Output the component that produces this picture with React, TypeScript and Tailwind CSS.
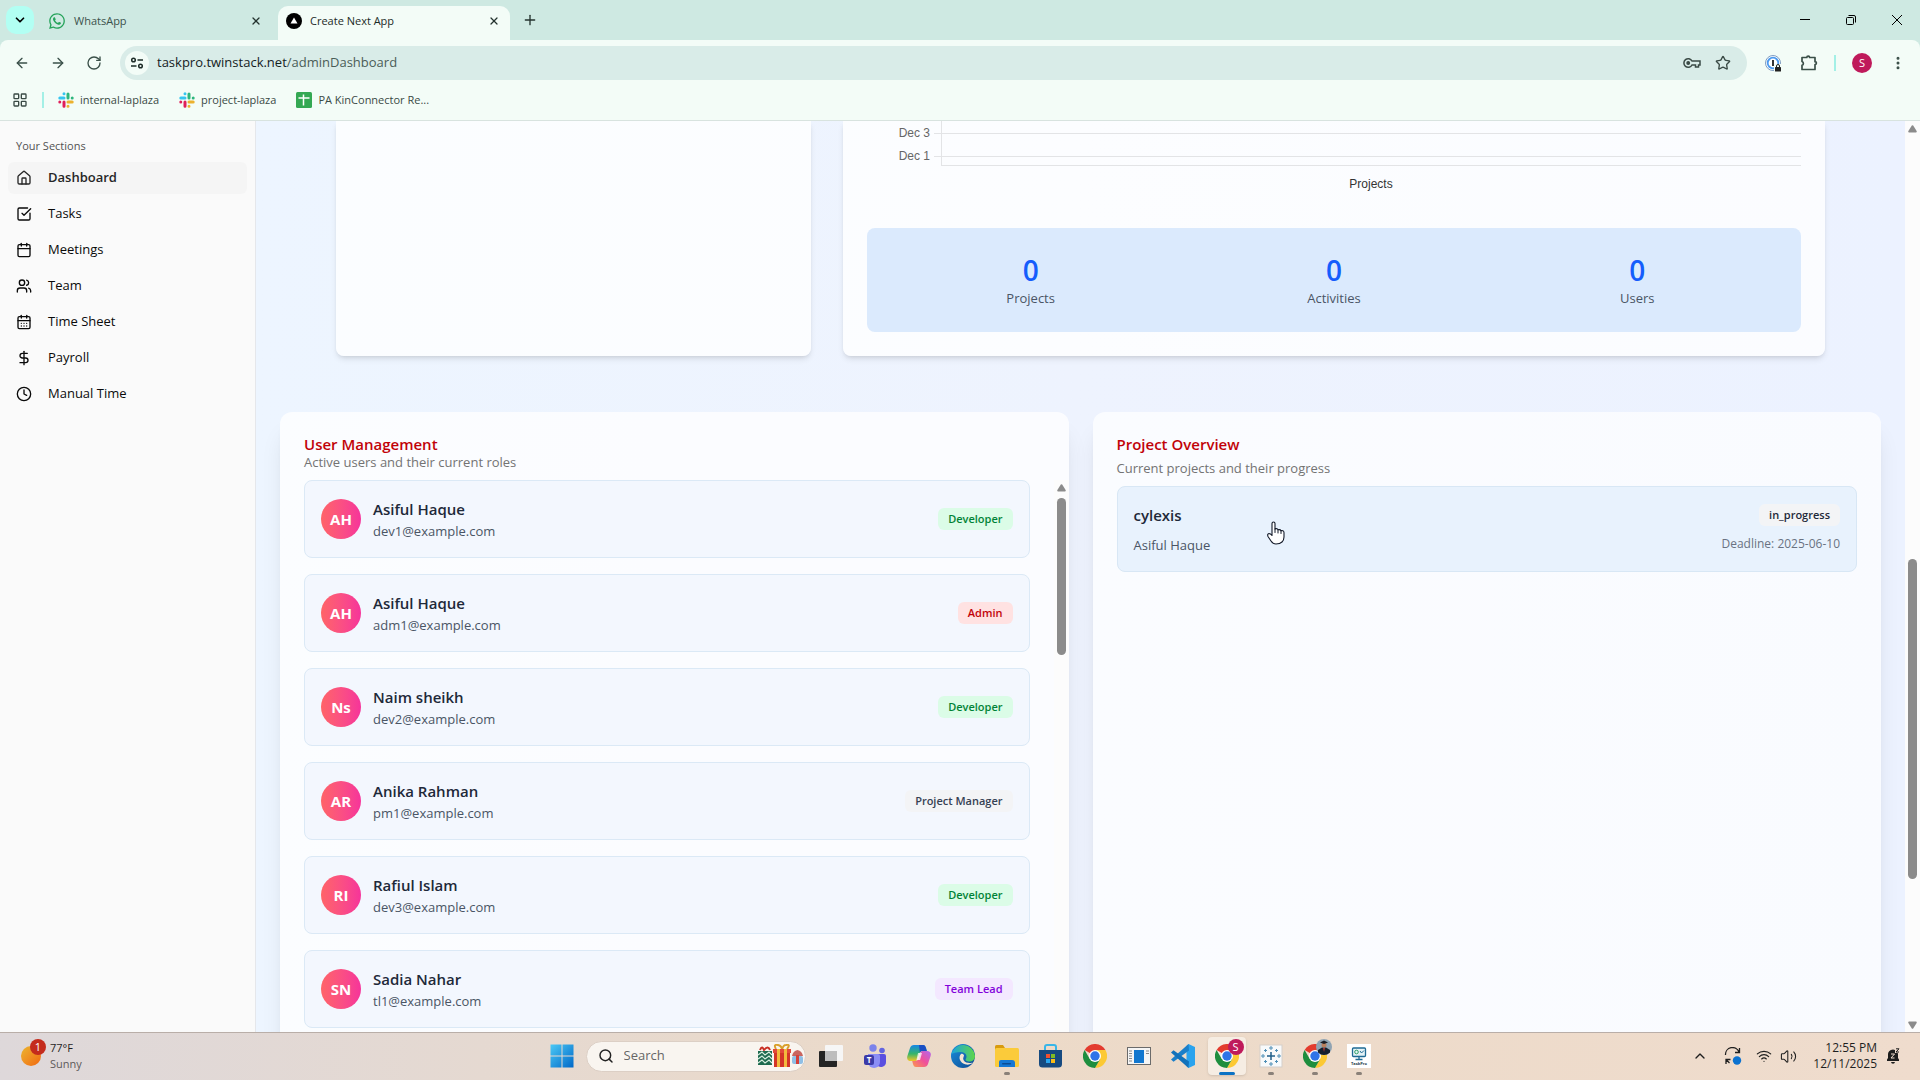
import type { ReactNode } from 'react';
import {
  ArrowLeft,
  ArrowRight,
  Calendar,
  CalendarDays,
  ChevronDown,
  ChevronUp,
  Clock,
  DollarSign,
  EllipsisVertical,
  House,
  LayoutGrid,
  Plus,
  RotateCw,
  Search,
  SquareCheckBig,
  Star,
  Users,
  Volume2,
  Wifi,
  X,
} from 'lucide-react';
import { FaWhatsapp } from 'react-icons/fa';

const navItems = [
  { label: 'Dashboard', icon: House, active: true },
  { label: 'Tasks', icon: SquareCheckBig },
  { label: 'Meetings', icon: Calendar },
  { label: 'Team', icon: Users },
  { label: 'Time Sheet', icon: CalendarDays },
  { label: 'Payroll', icon: DollarSign },
  { label: 'Manual Time', icon: Clock },
];

const users = [
  { initials: 'AH', name: 'Asiful Haque', email: 'dev1@example.com', role: 'Developer' },
  { initials: 'AH', name: 'Asiful Haque', email: 'adm1@example.com', role: 'Admin' },
  { initials: 'Ns', name: 'Naim sheikh', email: 'dev2@example.com', role: 'Developer' },
  { initials: 'AR', name: 'Anika Rahman', email: 'pm1@example.com', role: 'Project Manager' },
  { initials: 'RI', name: 'Rafiul Islam', email: 'dev3@example.com', role: 'Developer' },
  { initials: 'SN', name: 'Sadia Nahar', email: 'tl1@example.com', role: 'Team Lead' },
];

const roleColors: Record<string, string> = {
  Developer: 'bg-green-100 text-green-700',
  Admin: 'bg-red-100 text-red-700',
  'Project Manager': 'bg-gray-100 text-gray-700',
  'Team Lead': 'bg-purple-100 text-purple-700',
};

const stats = [
  { label: 'Projects', value: 0 },
  { label: 'Activities', value: 0 },
  { label: 'Users', value: 0 },
];

function SlackLogo() {
  return (
    <svg viewBox="0 0 16 16" className="size-4">
      <g strokeWidth="3" strokeLinecap="round">
        <path d="M6 1.8v0M1.8 6h4.2" stroke="#36c5f0" />
        <path d="M10 2v4M14.2 6v0" stroke="#2eb67d" />
        <path d="M10 10h4.2M10 14.2v0" stroke="#ecb22e" />
        <path d="M6 10v4.2M1.8 10v0" stroke="#e01e5a" />
      </g>
    </svg>
  );
}

function ChromeLogo() {
  return (
    <svg viewBox="0 0 24 24" className="size-6">
      <path d="M12 12L1.6 6A12 12 0 0 1 22.4 6Z" fill="#e33b2e" />
      <path d="M12 6h10.4a12 12 0 0 1-10.4 18l5.2-9Z" fill="#fcc934" />
      <path d="M6.8 15L1.6 6A12 12 0 0 0 12 24l5.2-9Z" fill="#1e8e3e" />
      <circle cx="12" cy="12" r="6" fill="#fff" />
      <circle cx="12" cy="12" r="4.7" fill="#2f74e8" />
    </svg>
  );
}

function TaskViewIcon() {
  return (
    <svg viewBox="0 0 24 24" className="size-6">
      <rect x="6" y="1" width="18" height="16" rx="1" fill="#f6f6f6" />
      <rect x="0" y="7" width="18" height="16" rx="1" fill="#242424" />
      <rect x="6" y="7" width="12" height="10" fill="#bdbdbd" />
    </svg>
  );
}

function TeamsLogo() {
  return (
    <svg viewBox="0 0 24 24" className="size-6">
      <circle cx="10" cy="4" r="3.7" fill="#7b83eb" />
      <circle cx="19" cy="6.5" r="2.8" fill="#6264e0" />
      <path d="M14 10h7a2 2 0 0 1 2 2v6a5 5 0 0 1-9 3Z" fill="#5b4fe0" />
      <path d="M5 10h10a2 2 0 0 1 2 2v6a6 6 0 0 1-12 0Z" fill="#8b8df5" />
      <rect x="1" y="11" width="10" height="10" rx="2" fill="#3b3aa8" />
      <text x="6" y="19" textAnchor="middle" fontSize="8" fontWeight="700" fill="#fff" fontFamily="Open Sans, sans-serif">T</text>
    </svg>
  );
}

function CopilotLogo() {
  return (
    <svg viewBox="0 0 24 24" className="size-6">
      <defs>
        <linearGradient id="cpA" x1="0" y1="0" x2="0" y2="1">
          <stop offset="0" stopColor="#1687e8" />
          <stop offset=".55" stopColor="#35b56a" />
          <stop offset="1" stopColor="#f3c627" />
        </linearGradient>
        <linearGradient id="cpB" x1="1" y1="0" x2="0" y2="1">
          <stop offset="0" stopColor="#b267ef" />
          <stop offset=".5" stopColor="#f0509a" />
          <stop offset="1" stopColor="#fb9a4b" />
        </linearGradient>
      </defs>
      <path d="M7 1h9c2 0 2.500 1.500 3 3l.8 3h-4c-2 0-3 1-3.500 3l-1.600 5c-.5 1.600-1.500 2-3 2H4c-3 0-4.500-2-3.600-5L3 4c.7-2 2-3 4-3Z" fill="url(#cpA)" />
      <path d="M12 1h4c2 0 2.500 1.500 3 3l.8 3h-4c-1.500 0-2.300.500-3 1.500Z" fill="#1a4fc4" />
      <path d="M17 23H9c-2 0-2.600-1.500-3-3l-.8-3h3c2 0 3-1 3.500-3l1.600-5c.5-1.600 1.500-2 3-2H20c3 0 4.500 2 3.600 5L21 20c-.7 2-2 3-4 3Z" fill="url(#cpB)" />
      <path d="M11 9h4l-2 7H9.500Z" fill="#fff" opacity=".75" />
    </svg>
  );
}

function EdgeLogo() {
  return (
    <svg viewBox="0 0 24 24" className="size-6">
      <defs>
        <linearGradient id="edgeTop" x1="0" y1="0" x2="1" y2="0">
          <stop offset="0" stopColor="#1ba4de" />
          <stop offset="1" stopColor="#5ed648" />
        </linearGradient>
        <linearGradient id="edgeLow" x1="0" y1="0" x2="1" y2="1">
          <stop offset="0" stopColor="#1c8fdd" />
          <stop offset="1" stopColor="#0c4a92" />
        </linearGradient>
      </defs>
      <circle cx="12" cy="12" r="12" fill="url(#edgeLow)" />
      <path d="M.3 10.500A12 12 0 0 1 24 12c0 3.500-2.500 5.500-5.500 5.500-3 0-4.500-1.500-3.700-2.600 2-3-.3-6.900-4.800-6.900C5 8 1.500 9.300.3 10.500Z" fill="url(#edgeTop)" />
      <path d="M10 10c-3 3-1.500 9 5 10.500 2.500.5 5-.3 7-2-1 .500-7.500 1.500-9.500-2.500-1-2 .500-3.500.500-4.500S11.500 9 10 10Z" fill="#f2e3d4" />
    </svg>
  );
}

function ExplorerLogo() {
  return (
    <svg viewBox="0 0 24 24" className="size-6">
      <path d="M0 2.500Q0 1 1.500 1H8l2 3v4H0Z" fill="#d89b10" />
      <rect x="0" y="4" width="24" height="19" rx="1.500" fill="#fbcb3a" />
      <path d="M4 23v-5q0-2 2-2h11q3 0 3 3v4Z" fill="#1578d4" />
      <rect x="7" y="19" width="9" height="1.500" rx=".7" fill="#0b4c94" />
    </svg>
  );
}

function StoreLogo() {
  return (
    <svg viewBox="0 0 24 24" className="size-6">
      <path d="M6 6V3q0-2 2-2h7q2 0 2 2v3" fill="none" stroke="#38b6e8" strokeWidth="2" />
      <path d="M0 6h23v14q0 3.500-3.500 3.500h-16Q0 23.500 0 20Z" fill="#164a80" />
      <path d="M7 10h4v4H7Z" fill="#f05030" />
      <path d="M12 10h4v4h-4Z" fill="#7fbb25" />
      <path d="M7 15h4v4H7Z" fill="#2aa5ee" />
      <path d="M12 15h4v4h-4Z" fill="#fbbc16" />
    </svg>
  );
}

function WindowAppIcon() {
  return (
    <svg viewBox="0 0 24 24" className="size-6">
      <rect x=".5" y="3.500" width="23" height="17" fill="#f5f5f5" stroke="#6b6b6b" />
      <rect x="7" y="6" width="10" height="13" fill="#1277cf" />
      <path d="M2 7h3M2 9.500h3M2 12h3M2 14.500h3M2 17h3M19 7h3M19 9.500h3" stroke="#888" />
    </svg>
  );
}

function VsCodeLogo() {
  return (
    <svg viewBox="0 0 24 24" className="size-6">
      <path d="M17.500 0L24 3v18l-6.500 3-2-2V2Z" fill="#2aa3ee" />
      <path d="M17.500 0L0 15.500l2.500 2.300L18 6.500Z" fill="#1b7fc9" />
      <path d="M17.500 24L0 8.500l2.500-2.300L18 17.500Z" fill="#1272bb" />
    </svg>
  );
}

function BurstAppIcon() {
  return (
    <svg viewBox="0 0 24 24" className="size-6">
      <rect x="1" y="1" width="22" height="22" fill="#f8fafb" stroke="#d5cfca" />
      <path d="M12 8v8M8 12h8" stroke="#1f5f8a" strokeWidth="1.500" />
      <path d="M12 2v4M10 4h4M12 18v4M10 20h4M4 10v4M2 12h4M20 10v4M18 12h4M6.500 5v3M5 6.500h3M17.500 5v3M16 6.500h3M6.500 16v3M5 17.500h3M17.500 16v3M16 17.500h3" stroke="#4f8fb6" strokeWidth="1" />
    </svg>
  );
}

function TaskProIcon() {
  return (
    <svg viewBox="0 0 24 24" className="size-6">
      <rect width="24" height="24" fill="#fff" />
      <rect x="5.500" y="4" width="13" height="8.500" rx="1" fill="#e4f2f6" stroke="#1f6b94" strokeWidth="1.300" />
      <circle cx="9.500" cy="8" r="1.800" fill="none" stroke="#2da065" />
      <path d="M13 7l1.500 2L17 6.500" stroke="#1f6b94" fill="none" />
      <path d="M12 13v2M8.500 15.500h7" stroke="#1f6b94" strokeWidth="1.300" />
      <text x="12" y="20.500" textAnchor="middle" fontSize="4" fontWeight="700" fill="#243746" fontFamily="Open Sans, sans-serif">TaskPro</text>
    </svg>
  );
}

function GiftsIcon() {
  return (
    <svg viewBox="0 0 46 24" className="h-6 w-[46px]">
      <path d="M3 6q2-5 4 0q4-5 6 0" fill="none" stroke="#c92f24" strokeWidth="2" />
      <rect x="1" y="7" width="14" height="14" fill="#1e6a4f" />
      <path d="M1 11l4-3 3 3 4-3 3 3M1 15l4-3 3 3 4-3 3 3M1 19l4-3 3 3 4-3 3 3" fill="none" stroke="#d9efe0" strokeWidth="1.200" />
      <path d="M19 5q-3-5 2-4 4 1 4 5 1-5 4-5 5-1 1 4" fill="none" stroke="#d9a02c" strokeWidth="2" />
      <rect x="16" y="5" width="18" height="4" fill="#e2493a" />
      <rect x="17" y="9" width="16" height="14" fill="#d33428" />
      <rect x="20" y="5" width="3" height="18" fill="#f2b93c" />
      <rect x="27" y="5" width="3" height="18" fill="#f2b93c" />
      <rect x="35" y="12" width="11" height="8" rx="2" fill="#8fbfe6" />
      <path d="M35 12q1-5 5.500-6 4.500 1 5.500 6Z" fill="#c9655f" />
      <rect x="39" y="11" width="3" height="9" fill="#d5403a" />
    </svg>
  );
}

function TabItem({ icon, title, active }: { icon: ReactNode; title: string; active?: boolean }) {
  return (
    <div
      className={
        active
          ? 'flex h-[34px] w-[232px] items-center gap-2 rounded-t-[10px] bg-[#f3fcf7] pr-2 pb-1 pl-2'
          : 'flex h-[34px] w-[228px] items-center gap-2 pr-3 pb-1'
      }
    >
      {icon}
      <button className={active ? 'flex-1 text-left text-[#1c2b27]' : 'flex-1 text-left text-[#3c524c]'}>{title}</button>
      <button aria-label={`Close ${title}`} className="p-0.5">
        <X className="size-3" strokeWidth={2.5} />
      </button>
    </div>
  );
}

function BrowserChrome() {
  return (
    <header className="bg-[#cee9e2] text-[11px] text-[#24332f]">
      <div className="flex h-10 items-end pl-1.5">
        <button aria-label="Search tabs" className="mb-1.5 flex h-7 w-7 items-center justify-center rounded-[10px] bg-[#b2fff3] text-black">
          <ChevronDown className="size-3.5" strokeWidth={3} />
        </button>
        <div className="ml-3.5 flex">
          <TabItem icon={<FaWhatsapp className="size-[18px] text-[#25a35a]" />} title="WhatsApp" />
          <div className="w-0.5" />
          <TabItem
            active
            title="Create Next App"
            icon={
              <svg viewBox="0 0 16 16" className="size-4">
                <circle cx="8" cy="8" r="8" />
                <path d="M8 4.500l3.500 6h-7Z" fill="#fff" />
              </svg>
            }
          />
        </div>
        <button aria-label="New tab" className="mb-3 ml-3">
          <Plus className="size-4" />
        </button>
        <div className="ml-auto flex h-10 items-center text-black">
          <button aria-label="Minimize" className="flex w-[46px] justify-center">
            <svg viewBox="0 0 10 10" className="size-2.5" stroke="currentColor"><path d="M0 4.500h10" /></svg>
          </button>
          <button aria-label="Restore" className="flex w-[46px] justify-center">
            <svg viewBox="0 0 10 10" className="size-2.5" fill="none" stroke="currentColor">
              <rect x=".5" y="2.500" width="7" height="7" rx="1" />
              <path d="M2.500.5H8q1.500 0 1.500 1.500v5.500" />
            </svg>
          </button>
          <button aria-label="Close" className="flex w-[46px] justify-center">
            <svg viewBox="0 0 10 10" className="size-2.5" stroke="currentColor"><path d="M0 0l10 10M10 0L0 10" /></svg>
          </button>
        </div>
      </div>

      <div className="rounded-t-lg border-b border-[#d8e3df] bg-[#f3fcf7]">
        <div className="flex h-[46px] items-center pl-3.5">
          <div className="flex w-[106px] items-center gap-5 text-[#3a5049]">
            <button aria-label="Back"><ArrowLeft className="size-4" /></button>
            <button aria-label="Forward"><ArrowRight className="size-4" /></button>
            <button aria-label="Reload"><RotateCw className="size-4" /></button>
          </div>
          <div className="flex h-[34px] flex-1 items-center rounded-full bg-[#d9ece8] pr-4 pl-[5px]">
            <button aria-label="Site information" className="flex size-6 items-center justify-center rounded-full bg-[#f3fcf7]">
              <svg viewBox="0 0 14 14" className="size-3.5" fill="none" stroke="#1c2b27" strokeWidth="1.500">
                <circle cx="3.500" cy="4" r="1.800" />
                <circle cx="10.500" cy="10" r="1.800" />
                <path d="M7.500 4H13M1 10h5.500" />
              </svg>
            </button>
            <label className="ml-2 flex flex-1 text-[13px]">
              <span className="text-[#14211d]">taskpro.twinstack.net</span>
              <input aria-label="Address" defaultValue="/adminDashboard" className="flex-1 bg-transparent text-[#4a5d57] outline-none" />
            </label>
            <div className="flex items-center gap-3.5 text-[#3a4a45]">
              <button aria-label="Passwords">
                <svg viewBox="0 0 18 12" className="h-3 w-[18px]" fill="none" stroke="currentColor" strokeWidth="1.500">
                  <path d="M9 4A4.300 4.300 0 1 0 9 8h3.500v2h3V8H17V4Z" />
                  <circle cx="5.200" cy="6" r="1.200" fill="currentColor" />
                </svg>
              </button>
              <button aria-label="Bookmark this page"><Star className="size-4" /></button>
            </div>
          </div>
          <div className="flex items-center pr-3.5 pl-[18px] text-[#3a4f48]">
            <button aria-label="1Password">
              <svg viewBox="0 0 17 17" className="size-[17px]">
                <circle cx="8" cy="8" r="7.500" fill="#fff" stroke="#7f9cc0" />
                <circle cx="8" cy="8" r="5.300" fill="none" stroke="#4c9af0" strokeWidth="1.800" />
                <path d="M8 5v6" stroke="#333" strokeWidth="2" />
                <rect x="9" y="9" width="8" height="8" fill="#f3fcf7" />
                <rect x="10" y="12" width="6" height="4.500" rx=".6" fill="#222" />
                <path d="M11.500 12v-1a1.500 1.500 0 0 1 3 0v1" fill="none" stroke="#222" />
              </svg>
            </button>
            <button aria-label="Extensions" className="ml-[18px]">
              <svg viewBox="0 0 18 18" className="size-[18px]" fill="none" stroke="currentColor" strokeWidth="1.700">
                <path d="M2 3.500h4.800a1.400 1.400 0 0 1 2.800 0H15v4.200a1.400 1.400 0 0 1 0 2.800v5H2v-4.200a2 2 0 0 0 0-3.800Z" strokeLinejoin="round" />
              </svg>
            </button>
            <span className="ml-4 h-4 w-0.5 bg-[#a3f0e6]" />
            <button aria-label="Profile" className="ml-4 flex size-5 items-center justify-center rounded-full bg-[#bf1a5b] text-[11px] text-white">S</button>
            <button aria-label="Menu" className="ml-[18px]"><EllipsisVertical className="size-4" strokeWidth={2.5} /></button>
          </div>
        </div>
        <nav className="flex h-[34px] items-center pb-1.5 pl-3 text-[#3a4a45]">
          <button aria-label="Apps"><LayoutGrid className="size-4" /></button>
          <span className="mx-3.5 h-4 w-0.5 bg-[#a3f0e6]" />
          <a href="#internal" className="flex items-center gap-1.5"><SlackLogo />internal-laplaza</a>
          <a href="#project" className="ml-5 flex items-center gap-1.5"><SlackLogo />project-laplaza</a>
          <a href="#sheet" className="ml-5 flex items-center gap-1.5">
            <svg viewBox="0 0 16 16" className="size-4">
              <rect width="16" height="16" rx="1.500" fill="#34a853" />
              <path d="M7.500 2.500v11M2.500 6h11" stroke="#fff" strokeWidth="1.500" />
            </svg>
            PA KinConnector Re...
          </a>
        </nav>
      </div>
    </header>
  );
}

function Sidebar() {
  return (
    <aside className="w-64 shrink-0 border-r border-gray-200 bg-[#fafafa] px-2 pt-[9px]">
      <h2 className="flex h-8 items-center px-2 text-[11px] font-medium text-neutral-600">Your Sections</h2>
      <nav className="flex flex-col gap-1">
        {navItems.map(({ label, icon: Icon, active }) => (
          <a
            key={label}
            href={`#${label}`}
            className={
              active
                ? 'flex h-8 items-center gap-4 rounded-md bg-neutral-100 px-2 text-[13px] font-semibold text-neutral-800'
                : 'flex h-8 items-center gap-4 rounded-md px-2 text-[13px] text-neutral-950'
            }
          >
            <Icon className="size-4" />
            {label}
          </a>
        ))}
      </nav>
    </aside>
  );
}

function ActivityChart() {
  return (
    <figure>
      <svg className="h-[47px] w-full" fontSize="12" fontFamily="Liberation Sans, Arial, sans-serif">
        <g stroke="#e3e4e6" shapeRendering="crispEdges">
          <line x1="67" x2="100%" y1="12" y2="12" />
          <line x1="67" x2="100%" y1="35" y2="35" />
          <line x1="74" x2="100%" y1="44" y2="44" />
          <line x1="74" x2="74" y1="0" y2="45" />
        </g>
        <g fill="#666" textAnchor="end">
          <text x="63" y="16">Dec 3</text>
          <text x="63" y="39">Dec 1</text>
        </g>
      </svg>
      <figcaption className="mt-1.5 pl-[74px] text-center font-[Liberation_Sans,Arial,sans-serif] text-xs leading-5 text-[#333]">
        Projects
      </figcaption>
    </figure>
  );
}

// Arrow glyph shared by both scrollbars
function ScrollArrow({ down }: { down?: boolean }) {
  return (
    <svg viewBox="0 0 9 8" className={down ? 'h-2 w-[9px] rotate-180' : 'h-2 w-[9px]'} fill="#8b8b8b">
      <path d="M3.800.6q.7-.9 1.400 0L8.600 6q.6 1.500-.8 1.500H1.200Q-.2 7.500.4 6Z" />
    </svg>
  );
}

function UserManagement() {
  return (
    <section className="flex h-[760px] flex-col rounded-xl bg-white/75 pt-6 pl-6 shadow-xl">
      <h2 className="text-[15px] leading-4 font-semibold text-red-700">User Management</h2>
      <p className="text-[13px] leading-5 text-neutral-500">Active users and their current roles</p>
      <div className="mt-2 flex min-h-0 flex-1">
        <ul className="flex flex-1 flex-col gap-4 pr-6">
          {users.map((user) => (
            <li key={user.email} className="flex h-[78px] shrink-0 items-center gap-3 rounded-lg border border-[#dbe9f6] bg-[#f3f7fe] px-4">
              <span className="flex size-10 items-center justify-center rounded-full bg-linear-to-r from-[#ff6467] to-[#f6339a] text-[15px] font-bold text-white">
                {user.initials}
              </span>
              <div className="flex-1">
                <p className="text-[15px] leading-6 font-semibold text-gray-800">{user.name}</p>
                <p className="text-[13px] leading-5 text-gray-600">{user.email}</p>
              </div>
              <span className={`rounded-md px-2.5 text-[11px] leading-[22px] font-semibold ${roleColors[user.role]}`}>{user.role}</span>
            </li>
          ))}
        </ul>
        <div className="flex w-[15px] shrink-0 flex-col items-center gap-1.5 bg-[#fcfcfc] pt-1">
          <ScrollArrow />
          <div className="h-[157px] w-[9px] rounded-full bg-[#8b8b8b]" />
        </div>
      </div>
    </section>
  );
}

function ProjectOverview() {
  return (
    <section className="h-[760px] rounded-xl bg-white/70 p-6 shadow-xl">
      <h2 className="text-[15px] leading-4 font-semibold text-red-700">Project Overview</h2>
      <p className="mt-1.5 text-[13px] leading-5 text-neutral-500">Current projects and their progress</p>
      <article className="mt-2 flex h-[86px] justify-between rounded-lg border border-[#d8e7f5] bg-[#e8f2fd] p-4">
        <div>
          <h3 className="text-[15px] leading-6 font-semibold text-gray-800">cylexis</h3>
          <p className="mt-2 text-[13px] leading-5 text-gray-600">Asiful Haque</p>
        </div>
        <div className="flex flex-col items-end pt-px">
          <span className="rounded-md bg-gray-100 px-2.5 text-[11px] leading-[22px] font-semibold text-gray-800">in_progress</span>
          <p className="mt-2 text-xs leading-5 text-gray-500">Deadline: 2025-06-10</p>
        </div>
      </article>
    </section>
  );
}

function Dashboard() {
  return (
    <main className="min-w-0 flex-1 overflow-hidden bg-linear-to-r from-[#edf5ff] via-[#eef3fe] to-[#ecf2ff] px-6">
      <div className="grid grid-cols-3 gap-8 px-14">
        <section className="rounded-b-lg bg-white/80 shadow-md" />
        <section className="col-span-2 rounded-b-lg bg-white/80 px-6 pb-6 shadow-md">
          <ActivityChart />
          <dl className="mt-[34px] grid grid-cols-3 gap-6 rounded-lg bg-[#dbeafd] p-6 text-center">
            {stats.map((stat) => (
              <div key={stat.label} className="flex flex-col-reverse">
                <dt className="text-[13px] leading-5 text-gray-600">{stat.label}</dt>
                <dd className="text-[28px] leading-9 font-semibold text-[#155dfc]">{stat.value}</dd>
              </div>
            ))}
          </dl>
        </section>
      </div>
      <div className="mt-14 grid grid-cols-2 gap-6">
        <UserManagement />
        <ProjectOverview />
      </div>
    </main>
  );
}

function PageScrollbar() {
  return (
    <div className="flex w-[15px] shrink-0 flex-col items-center bg-[#fcfcfc] pt-1 pb-[3px]">
      <ScrollArrow />
      <div className="flex-[426]" />
      <div className="w-[9px] flex-[320] rounded-full bg-[#8b8b8b]" />
      <div className="flex-[142]" />
      <ScrollArrow down />
    </div>
  );
}

function TaskbarApp({ label, running, active, children }: { label: string; running?: boolean; active?: boolean; children: ReactNode }) {
  return (
    <button aria-label={label} className="relative flex h-[46px] w-11 items-center justify-center">
      {active && <span className="absolute inset-x-[3px] inset-y-1 rounded bg-[#f6ede3] shadow-sm" />}
      <span className="relative">{children}</span>
      {active && <span className="absolute bottom-1 h-[3px] w-4 rounded-full bg-[#0b72c4]" />}
      {running && <span className="absolute bottom-1 h-[3px] w-1.5 rounded-full bg-[#8a8179]" />}
    </button>
  );
}

function Taskbar() {
  return (
    <footer className="grid h-12 grid-cols-[1fr_auto_1fr] items-center border-t border-[#b9aea8] bg-linear-to-r from-[#ded8da] via-[#ecdac8] to-[#efdccd] pb-px text-[11px] text-[#1f1f1f]">
      <button className="flex items-center gap-[9px] pl-5 text-left">
        <span className="relative ml-px size-5 rounded-full bg-linear-to-br from-[#eab530] to-[#f0660f]">
          <span className="absolute -top-[7px] left-[9px] flex size-4 items-center justify-center rounded-full bg-[#c42b1c] text-[11px] text-white">1</span>
        </span>
        <span className="leading-4">
          <span className="block">77°F</span>
          <span className="block text-[#5d5a5a]">Sunny</span>
        </span>
      </button>

      <div className="flex items-center">
        <TaskbarApp label="Start">
          <svg viewBox="0 0 24 24" className="size-6">
            <defs>
              <linearGradient id="win" x1="0" y1="0" x2="1" y2="1">
                <stop offset="0" stopColor="#4cc9f5" />
                <stop offset="1" stopColor="#0068c8" />
              </linearGradient>
            </defs>
            <path d="M.5.5h11v11H.5ZM12.500.5h11v11h-11ZM.5 12.500h11v11H.5ZM12.500 12.500h11v11h-11Z" fill="url(#win)" />
          </svg>
        </TaskbarApp>
        <label className="mr-[3px] ml-0.5 flex h-[31px] w-[220px] items-center rounded-full border border-[#dccfc5] bg-[#f9f5f0] pr-0.5 pl-[11px]">
          <Search className="size-4 text-[#222]" strokeWidth={2.2} />
          <input type="search" aria-label="Search" placeholder="Search" className="ml-2.5 w-0 flex-1 bg-transparent text-[13px] outline-none placeholder:text-[#666]" />
          <GiftsIcon />
        </label>
        <TaskbarApp label="Task view"><TaskViewIcon /></TaskbarApp>
        <TaskbarApp label="Teams"><TeamsLogo /></TaskbarApp>
        <TaskbarApp label="Copilot"><CopilotLogo /></TaskbarApp>
        <TaskbarApp label="Edge"><EdgeLogo /></TaskbarApp>
        <TaskbarApp label="File Explorer" running><ExplorerLogo /></TaskbarApp>
        <TaskbarApp label="Store"><StoreLogo /></TaskbarApp>
        <TaskbarApp label="Chrome"><ChromeLogo /></TaskbarApp>
        <TaskbarApp label="Window app"><WindowAppIcon /></TaskbarApp>
        <TaskbarApp label="Visual Studio Code"><VsCodeLogo /></TaskbarApp>
        <TaskbarApp label="Chrome, profile S" active>
          <ChromeLogo />
          <span className="absolute -top-[5px] left-[13px] flex size-4 items-center justify-center rounded-full bg-[#bf1a5b] text-[11px] text-white">S</span>
        </TaskbarApp>
        <TaskbarApp label="Tracker" running><BurstAppIcon /></TaskbarApp>
        <TaskbarApp label="Chrome, second profile" running>
          <ChromeLogo />
          <svg viewBox="0 0 16 16" className="absolute -top-[5px] left-[13px] size-4">
            <defs><clipPath id="face"><circle cx="8" cy="8" r="8" /></clipPath></defs>
            <g clipPath="url(#face)">
              <rect width="16" height="16" fill="#8fa3b3" />
              <path d="M2 16V11l4-2.500h4l4 2.500v5Z" fill="#16202e" />
              <circle cx="8" cy="6" r="2.500" fill="#b97f5e" />
              <path d="M4 3.500L8 1.500l4 2L8 5Z" fill="#1b1f28" />
              <path d="M7 9h2l-1 4Z" fill="#b23636" />
            </g>
          </svg>
        </TaskbarApp>
        <TaskbarApp label="TaskPro" running><TaskProIcon /></TaskbarApp>
      </div>

      <div className="flex items-center justify-end pr-5">
        <button aria-label="Show hidden icons"><ChevronUp className="size-4" /></button>
        <button aria-label="Sync" className="ml-4">
          <svg viewBox="0 0 18 18" className="size-[18px]" fill="none" stroke="#1f1f1f" strokeWidth="1.300">
            <path d="M1.500 8A7 7 0 0 1 15 5M15.500 1v4.500H11M2 17v-4.500h4.500M2.500 13l3 3" />
            <circle cx="13" cy="13.500" r="4.200" fill="#0b72d0" stroke="none" />
          </svg>
        </button>
        <button aria-label="Network" className="ml-3.5 flex items-center gap-2">
          <Wifi className="size-4" strokeWidth={1.8} />
          <Volume2 className="size-[17px]" strokeWidth={1.5} />
        </button>
        <button className="ml-4 text-right text-xs leading-4">
          <time className="block">12:55 PM</time>
          <time className="block">12/11/2025</time>
        </button>
        <button aria-label="Notifications" className="ml-[9px]">
          <svg viewBox="0 0 14 16" className="h-4 w-3.5">
            <path d="M1 13v-1.500l1-1.500V6q.3-4 5-4.500 4.500.5 5 4.500v4l1 1.500V13ZM5 14h4q-.3 1.700-2 1.700T5 14Z" fill="#1d1d1d" />
            <rect x="9" y="0" width="5" height="5" fill="#efdccd" />
            <path d="M5 6h3.500L5 10h3.500" fill="none" stroke="#efdccd" strokeWidth="1" />
            <path d="M10 .8h3L10 4h3" fill="none" stroke="#1d1d1d" />
          </svg>
        </button>
      </div>
    </footer>
  );
}

function HandCursor() {
  return (
    <svg viewBox="0 0 18 24" className="pointer-events-none fixed top-[521px] left-[1267px] h-6 w-[18px]">
      <path
        d="M5 13V2.500a1.500 1.500 0 0 1 3 0V8q2.500-1 3 .8 2.300-.7 3 .9 3-.6 3 2V16q0 3-2 5-2 2-6 2-3 0-5-3l-3-4.500Q0 13 2 12.500q1.500 0 3 2Z"
        fill="#fff"
        stroke="#111827"
        strokeWidth="1.100"
        strokeLinejoin="round"
      />
      <path d="M8 8v3.500M11 9v3M14 10v2.500" stroke="#111827" strokeLinecap="round" />
    </svg>
  );
}

export default function App() {
  return (
    <div className="flex h-screen flex-col overflow-hidden font-['Open_Sans','Noto_Sans',sans-serif]">
      <BrowserChrome />
      <div className="flex min-h-0 flex-1">
        <Sidebar />
        <Dashboard />
        <PageScrollbar />
      </div>
      <Taskbar />
      <HandCursor />
    </div>
  );
}
